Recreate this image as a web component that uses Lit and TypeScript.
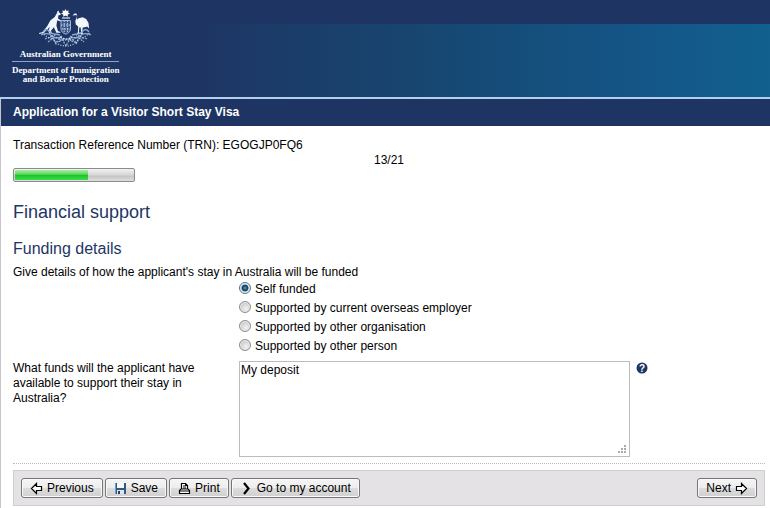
import { LitElement, html, css, svg } from "lit";
import { customElement, property, state } from "lit/decorators.js";

@customElement("gov-crest")
class GovCrest extends LitElement {
  static styles = css`
    :host { display: block; }
    .crest { display: block; margin: 0 auto; }
  `;
  render() {
    return html`
      <svg class="crest" width="54" height="40" viewBox="0 0 54 40" aria-hidden="true">
        <path fill="#fff" d="M26.500 1l1 2.100 2.300-.7-.8 2.200 2 1.200-2.300.7.100 2.300-2.300-1.300-2.300 1.300.1-2.300-2.300-.7 2-1.200-.8-2.200 2.300.7z"/>
        <path stroke="#dfe8f6" stroke-width="1.200" fill="none" d="M23 10h8"/>
        <path fill="#f2f7fd" d="M19.500 2.500l.6 2 1.600 1.300-.3 1.200-2 .2-.4 3.200 3 2-.4 1-3.400-1.200-.8 5.200 1.500 5.600 2.500 1v.7h-4l-2.500-5.500-3 3.600 1 2v.6h-2.800l-.6-2.300 1.300-4.300-5.700 6-5 1.200v-.9l3.600-1.200 4.600-5.900 3-5.600 4.400-3.500 2.300-4 .3-1.400z"/>
        <path fill="#f2f7fd" d="M33.500 7.500l2-2 1.700.1.900 1.300-.1 4.700 1.600-1.300 4-1 3.600 1.600 2.300 4.100.6 5.500-2-2.100-2.200.9-2.200.3-.5 4.600 1 1.100-.3.600h-2.700l.9-1.700-.4-4.600-1.400-.2-.4 4.600 1 1.200-.2.700h-3l1.200-1.700.3-5.600-2.400-2.200-.5-3.400 1.600-4-.3-2z"/>
        <path fill="#3b568d" stroke="#9db4d6" d="M22 12.500h9.500v8.500c0 2.500-2 4.200-4.700 5.200-2.800-1-4.800-2.700-4.800-5.200z"/>
        <path stroke="#c4d3e8" stroke-width="1" stroke-dasharray="1.500 1" fill="none" d="M22 17h9.500M25.200 12.500v12M28.400 12.500v12M23 21h8"/>
        <g fill="none" stroke="#8fa9d1" stroke-width="1.300">
          <path d="M4 24q3-4 6-1t5 3 6 1M50 24q-3-4-6-1t-5 3-6 1M2 27q7-3 11 1t10 0M52 27q-7-3-11 1t-10 0"/>
          <path stroke-dasharray="2 1" d="M6 31q5-3 9 1t9-1M48 31q-5-3-9 1t-9-1M9 34l5-4 3 6 5-7 5 9 5-9 5 7 3-6 5 4"/>
          <path stroke="#c0d0e8" stroke-dasharray="1 1.500" d="M3 25l7 5 5-3 6 5h12l6-5 5 3 7-5M19 36q8 4 16 0M12 28l5 7M42 28l-5 7"/>
        </g>
        <path stroke="#dfe8f6" stroke-width="1.300" fill="none" stroke-dasharray="2 1" d="M21 29q6 4 12 0"/>
      </svg>`;
  }
}

const icons = {
  previous: svg`<path d="M1.500 6.500l5-5v3h5v4h-5v3z" fill="#fff" stroke="#000" stroke-width="1.200"/>`,
  next: svg`<path d="M11.500 6.500l-5-5v3h-5v4h5v3z" fill="#fff" stroke="#000" stroke-width="1.200"/>`,
  save: svg`<path d="M1 1h11v11H1z" fill="#35587f"/><path d="M3 1h7v5H3z" fill="#f4f8fb"/><path d="M3 8h7v4H3z" fill="#dce6ee"/><path d="M4 9h2v3H4z" fill="#28415f"/><path d="M1 1h1v11H1z" fill="#6ba0d0"/>`,
  print: svg`<path d="M3.500 7V1.500h4l2 2V7M1.500 11.500v-3l1.500-1.500h7l1.500 1.500v3z" fill="#fff" stroke="#000" stroke-width="1.200"/><path d="M5 4h3M5 6h3M1.500 9h10M7.500 1.500v2h2" fill="none" stroke="#000"/>`,
  account: svg`<path d="M4 1l4.500 5.500L4 12" fill="none" stroke="#000" stroke-width="2.200"/>`,
};

@customElement("tool-button")
class ToolButton extends LitElement {
  @property() icon: keyof typeof icons = "next";
  @property() label = "";
  @property({ type: Boolean }) trailing = false;

  static styles = css`
    :host { display: block; }
    .button {
      display: flex; align-items: center; gap: 4px;
      box-sizing: border-box; height: 20px; padding: 0 8px; margin: 0;
      font: 12px/16px "Liberation Sans", Arial, sans-serif; color: #000;
      white-space: nowrap;
      border: 1px solid #77757a; border-radius: 3px;
      background: linear-gradient(#f5f5f5 0%, #ededed 48%, #dcdcdc 52%, #d0d0d0 100%);
      box-shadow: inset 0 0 0 1px #fafafa;
    }
    .trailing { flex-direction: row-reverse; }
    .icon { display: block; flex: none; }
  `;
  render() {
    return html`<button type="button" class="button ${this.trailing ? "trailing" : ""}">
      <svg class="icon" width="13" height="13" viewBox="0 0 13 13" aria-hidden="true">${icons[this.icon]}</svg>
      <span>${this.label}</span>
    </button>`;
  }
}

@customElement("app-root")
class AppRoot extends LitElement {
  @state() private funding = 0;
  private options = [
    "Self funded",
    "Supported by current overseas employer",
    "Supported by other organisation",
    "Supported by other person",
  ];

  static styles = css`
    :host {
      display: block; background: #fff; color: #000;
      font: 12px/15px "Liberation Sans", Arial, sans-serif;
    }
    .masthead {
      display: flex; box-sizing: border-box; min-height: 99px;
      padding: 8px 12px 0; border-bottom: 2px solid #b2d0ee;
      background:
        linear-gradient(90deg, #1e3564 0%, #1e3564 26%, #1b3d69 38%, #18446f 52%, #154e7b 68%, #145688 84%, #11608e 100%) 0 24px no-repeat,
        #1e3564;
    }
    .brand {
      text-align: center; color: #fff; white-space: nowrap;
      font: bold 9px/9px "Liberation Serif", "Times New Roman", serif;
    }
    .government { padding: 2px 0; }
    .department { padding-top: 4px; border-top: 1px solid #8da4c8; }
    .panel { border-left: 1px solid #c6c4cc; }
    .title {
      margin: 0; padding: 0 12px; background: #1e3564; color: #fff;
      font-size: 12px; line-height: 27px; font-weight: bold;
    }
    .content { padding: 12px 5px 3px 12px; }
    .trn, .prompt { margin: 0; }
    .step { text-align: center; }
    .progress {
      box-sizing: border-box; width: 122px; height: 14px; padding: 1px;
      border: 1px solid #8b8b8b; border-radius: 2px;
      background: linear-gradient(#f2f2f2, #d6d6d6 50%, #c6c6c6 60%, #dedede);
    }
    .bar { height: 100%; background: linear-gradient(#a6efa6, #62da65 40%, #1cc62c 55%, #3bdb49); }
    .heading { margin: 19px 0 0; color: #1e3564; font-size: 18px; line-height: 22px; font-weight: normal; }
    .subheading { margin: 16px 0 6px; color: #1e3564; font-size: 16px; line-height: 20px; font-weight: normal; }
    .group { margin: 0; padding: 0; border: 0; min-width: 0; }
    .prompt { padding: 0; }
    .options { margin-left: 226px; }
    .option { display: flex; align-items: center; gap: 4px; height: 19px; }
    .radio {
      appearance: none; flex: none; box-sizing: border-box; width: 12px; height: 12px;
      margin: 0 0 4px; border: 1px solid #8c8c8c; border-radius: 50%;
      background: radial-gradient(circle at 60% 65%, #f2f2f2, #c9c9c9 70%);
      box-shadow: inset 0 0 0 1px #eee;
    }
    .radio:checked {
      border-color: #587187;
      background: radial-gradient(circle, #5aa9c8 0, #164c6e 2px, #164c6e 3px, #dcebf2 4px);
    }
    .field { display: grid; grid-template-columns: 218px minmax(0, 1fr); gap: 8px; margin-top: 5px; }
    .question { padding-right: 12px; }
    .answer { display: flex; align-items: flex-start; gap: 6px; }
    .funds {
      display: block; box-sizing: border-box; width: 391px; max-width: 90%; height: 96px;
      margin: 0; padding: 1px; border: 1px solid #bcbcbc; border-radius: 0;
      background: #fff; color: #000; font: inherit; resize: both;
    }
    .funds::-webkit-resizer {
      background:
        linear-gradient(#aaa, #aaa) 10px 4px / 2px 2px no-repeat,
        linear-gradient(#aaa, #aaa) 10px 7px / 2px 2px no-repeat,
        linear-gradient(#aaa, #aaa) 7px 7px / 2px 2px no-repeat,
        linear-gradient(#aaa, #aaa) 10px 10px / 2px 2px no-repeat,
        linear-gradient(#aaa, #aaa) 7px 10px / 2px 2px no-repeat,
        linear-gradient(#aaa, #aaa) 4px 10px / 2px 2px no-repeat;
    }
    .help {
      display: block; margin: 1px 0 0; padding: 0; border: 0; background: none;
    }
    .help-icon { display: block; }
    .mark { font: bold 10px "Liberation Sans", Arial, sans-serif; fill: #fff; }
    .rule { margin: 6px 0; border: 0; border-top: 1px dotted #bbb; }
    .toolbar {
      display: flex; gap: 2px; padding: 7px; border: 1px solid #cfcdcf; background: #e4e2e4;
    }
    .forward { margin-left: auto; }
  `;

  render() {
    return html`
      <header class="masthead">
        <div class="brand">
          <gov-crest></gov-crest>
          <div class="government">Australian Government</div>
          <div class="department">Department of Immigration<br />and Border Protection</div>
        </div>
      </header>
      <main class="panel">
        <h1 class="title">Application for a Visitor Short Stay Visa</h1>
        <form class="content">
          <p class="trn">Transaction Reference Number (TRN): EGOGJP0FQ6</p>
          <div class="step">13/21</div>
          <div class="progress" role="progressbar" aria-label="Progress" aria-valuemin="0" aria-valuemax="21" aria-valuenow="13">
            <div class="bar" style="width: ${Math.round((13 / 21) * 100)}%"></div>
          </div>
          <h2 class="heading">Financial support</h2>
          <h3 class="subheading">Funding details</h3>
          <fieldset class="group">
            <legend class="prompt">Give details of how the applicant's stay in Australia will be funded</legend>
            <div class="options">
              ${this.options.map((text, i) => html`
                <label class="option">
                  <input class="radio" type="radio" name="funding" .checked=${this.funding === i}
                    @change=${() => (this.funding = i)} />
                  <span>${text}</span>
                </label>`)}
            </div>
          </fieldset>
          <div class="field">
            <label class="question" for="funds">What funds will the applicant have available to support their stay in Australia?</label>
            <div class="answer">
              <textarea class="funds" id="funds" .value=${"My deposit"}></textarea>
              <button class="help" type="button" aria-label="Help">
                <svg class="help-icon" width="12" height="12" viewBox="0 0 12 12" aria-hidden="true">
                  <circle cx="6" cy="6" r="5.500" fill="#1e3564" />
                  <text class="mark" x="6" y="9.500" text-anchor="middle">?</text>
                </svg>
              </button>
            </div>
          </div>
          <hr class="rule" />
          <div class="toolbar">
            <tool-button icon="previous" label="Previous"></tool-button>
            <tool-button icon="save" label="Save"></tool-button>
            <tool-button icon="print" label="Print"></tool-button>
            <tool-button icon="account" label="Go to my account"></tool-button>
            <tool-button class="forward" icon="next" label="Next" trailing></tool-button>
          </div>
        </form>
      </main>`;
  }
}
